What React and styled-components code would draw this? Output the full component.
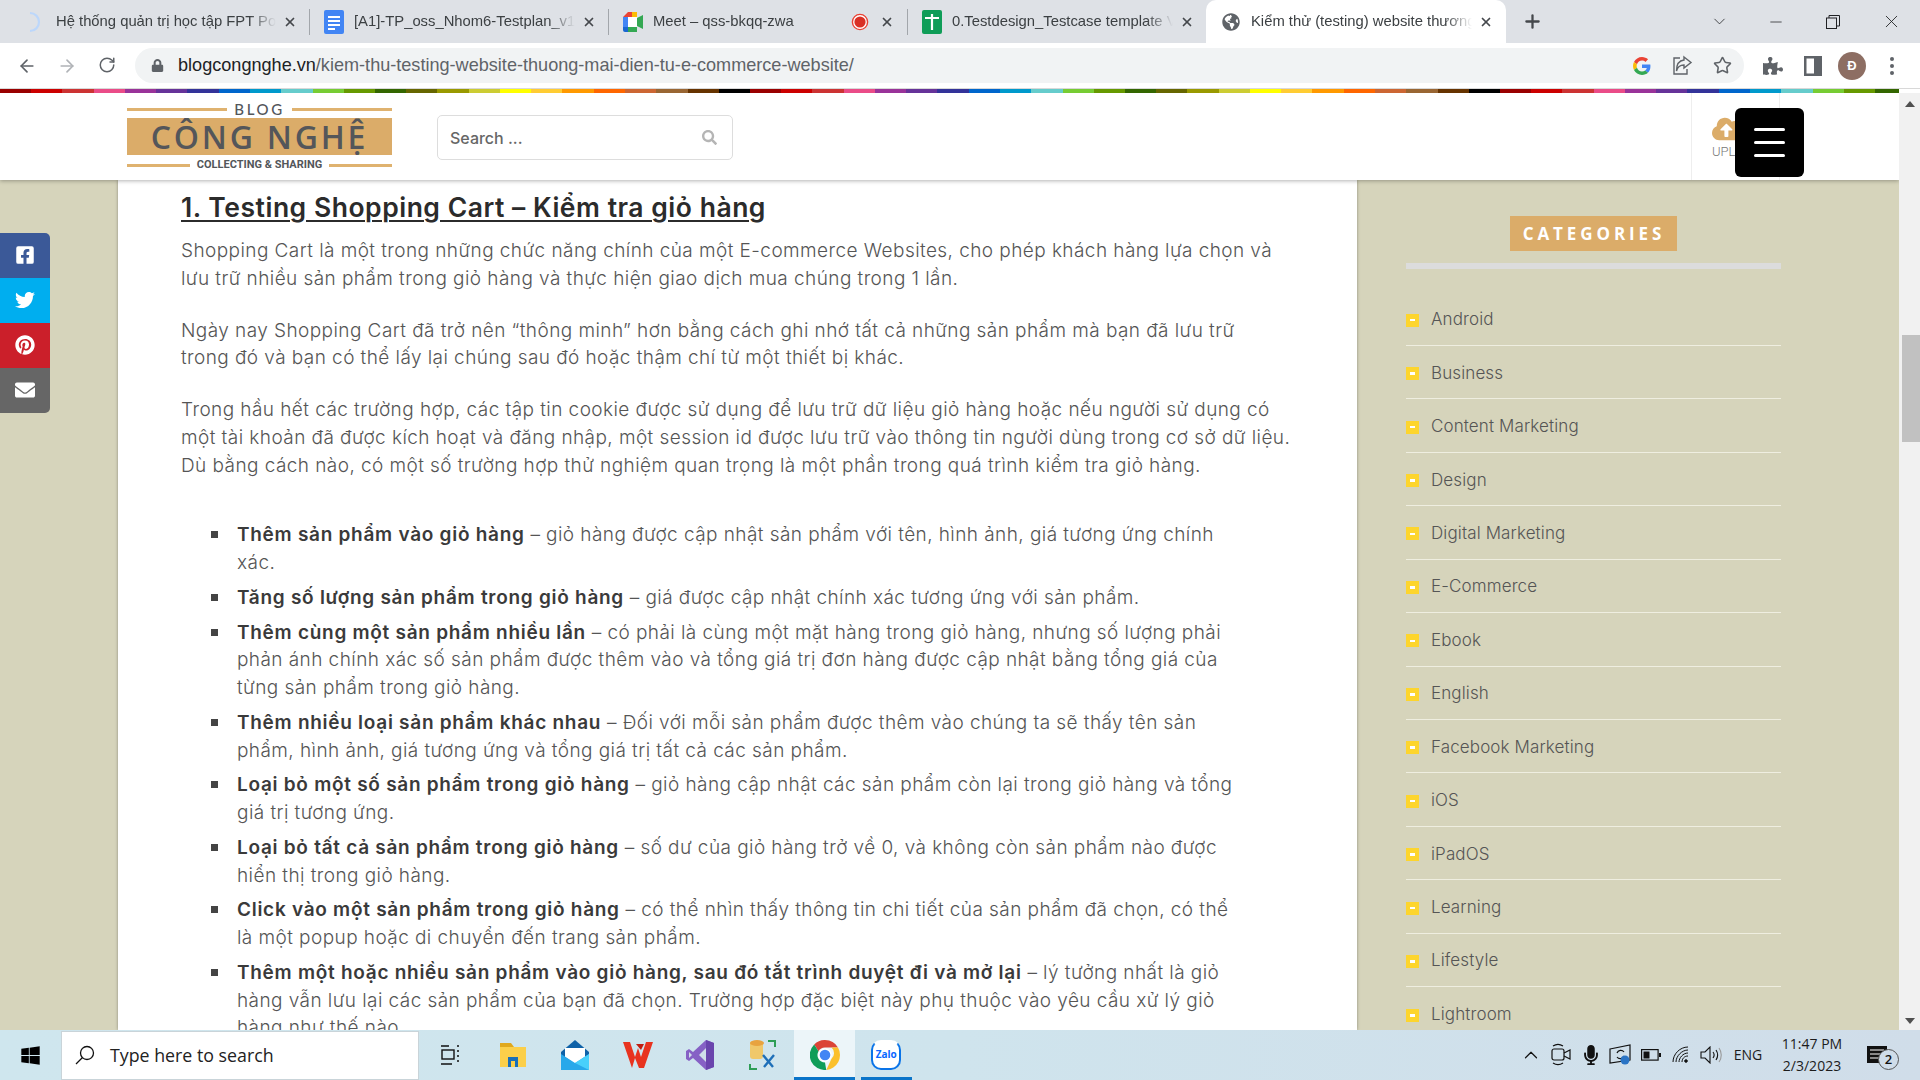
import React from "react";
import styled, { createGlobalStyle } from "styled-components";
import { ArrowLeft, ArrowRight, RotateCw, Star, X, Plus, ChevronDown, Minus, ChevronUp } from "lucide-react";
import { FaLock, FaSearch, FaGlobeAmericas, FaPuzzlePiece, FaCloudUploadAlt, FaFacebookSquare, FaTwitter, FaPinterest, FaEnvelope, FaWindows, FaMicrophone } from "react-icons/fa";

const Global = createGlobalStyle`
  html, body { margin: 0; padding: 0; width: 1920px; height: 1080px; overflow: hidden; }
  body { font-family: Inter, "Noto Sans", sans-serif; }
  * { box-sizing: border-box; }
`;
const UI = `"Liberation Sans", Arial, sans-serif`;
const Screen = styled.div`width:1920px;height:1080px;display:flex;flex-direction:column;overflow:hidden;`;

const TabBar = styled.div`height:43px;background:#dee1e6;display:flex;align-items:center;padding-left:10px;flex:none;`;
const Tab = styled.div`
  width:${p=>p.$w||299}px;height:43px;display:flex;align-items:center;position:relative;padding-left:${p=>p.$pad||14}px;
  font-family:${UI};font-size:14.8px;color:#3c4043;
  background:${p=>p.$active?"#fff":"transparent"};
  border-radius:${p=>p.$active?"10px 10px 0 0":"0"};
`;
const TabSepWrap = styled.div`width:1px;height:26px;background:#a2a6ab;flex:none;`;
const TabTitle = styled.span`flex:1;overflow:hidden;white-space:nowrap;margin-left:${p=>p.$ml||10}px;padding-bottom:2px;
  -webkit-mask-image:linear-gradient(90deg,#000 88%,transparent 100%);mask-image:linear-gradient(90deg,#000 88%,transparent 100%);`;
const TabClose = styled.span`width:28px;margin-left:${p=>p.$ml||0}px;margin-right:${p=>p.$mr||5}px;display:flex;justify-content:center;color:#45484c;flex:none;`;
const WinControls = styled.div`flex:1;display:flex;align-items:center;color:#202124;`;
const NewTab = styled.div`margin-left:16px;display:flex;color:#45484c;`;
const WinBtn = styled.div`position:relative;display:flex;justify-content:center;align-items:center;width:${p=>p.$w}px;margin-left:${p=>p.$ml||0}px;`;

const ToolBar = styled.div`height:46px;background:#fff;border-bottom:1px solid #d8d8d8;display:flex;align-items:center;padding:1px 0 1px 0;flex:none;`;
const NavIcon = styled.div`width:${p=>p.$w||40}px;margin-right:${p=>p.$mr||0}px;display:flex;justify-content:center;color:${p=>p.$c||"#5f6368"};flex:none;`;
const NavGroup = styled.div`display:flex;padding-left:7px;width:135px;`;
const Omnibox = styled.div`width:1609px;height:35px;background:#f1f3f4;border-radius:18px;display:flex;align-items:center;padding-left:16px;flex:none;`;
const Url = styled.div`margin-left:14px;font-family:${UI};font-size:18.1px;color:#5f6368;flex:1;white-space:nowrap;`;
const UrlHost = styled.span`color:#202124;`;
const Avatar = styled.div`width:28px;height:28px;border-radius:50%;background:#8d6e63;color:#fff;font:700 13px ${UI};display:flex;align-items:center;justify-content:center;margin-left:14px;`;

const Rainbow = styled.div`height:4px;flex:none;width:1899px;
  background:linear-gradient(90deg,${p=>p.$stops});background-size:750px 4px;background-repeat:repeat-x;`;

const Viewport = styled.div`flex:1;display:flex;min-height:0;position:relative;`;
const Page = styled.div`width:1899px;position:relative;overflow:hidden;background:#d6d4bb;display:flex;flex-direction:column;`;
const Header = styled.header`height:87px;flex:none;background:#fff;box-shadow:0 1px 4px rgba(0,0,0,.3);position:relative;z-index:3;display:flex;align-items:flex-start;padding-left:127px;`;
const Logo = styled.div`width:265px;margin-top:10px;display:flex;flex-direction:column;color:#53565a;`;
const LogoRow = styled.div`display:flex;align-items:center;gap:${p=>p.$gap}px;height:${p=>p.$h}px;line-height:${p=>p.$h}px;font-family:${p=>p.$font||"Lato"},sans-serif;font-size:${p=>p.$fs}px;letter-spacing:${p=>p.$ls}px;font-weight:${p=>p.$fw||500};white-space:nowrap;`;
const LogoLine = styled.i`flex:1;height:3px;background:#dfb26f;display:block;`;
const LogoBox = styled.div`height:37px;margin:2px 0 3px;background:#dbac69;display:flex;align-items:center;justify-content:center;font:600 32px/30px "Open Sans",sans-serif;letter-spacing:2.8px;padding-top:1px;white-space:nowrap;color:#54565a;`;
const SearchBox = styled.div`margin:22px 0 0 45px;width:296px;height:45px;border:1px solid #ddd;border-radius:5px;display:flex;align-items:center;justify-content:space-between;padding:0 15px 0 12px;font:500 16px Inter,sans-serif;color:#666;`;
const Upload = styled.div`margin-left:auto;margin-right:119px;width:89px;height:87px;border-left:1px solid #eee;border-right:1px solid #eee;padding:20px 0 0 20px;color:#777;font:300 13px Roboto,sans-serif;display:flex;flex-direction:column;`;
const UploadText = styled.span`margin-top:-1px;`;
const Burger = styled.div`position:absolute;left:1735px;top:15px;width:69px;height:69px;background:#000;border-radius:6px;display:flex;flex-direction:column;align-items:center;justify-content:center;gap:10px;`;
const BurgerBar = styled.i`display:block;width:31px;height:3px;border-radius:2px;background:#fff;`;

const Share = styled.div`position:absolute;left:0;top:140px;width:50px;border-radius:0 5px 5px 0;overflow:hidden;z-index:2;`;
const ShareBtn = styled.div`height:45px;background:${p=>p.$bg};color:#fff;display:flex;align-items:center;justify-content:center;padding-bottom:2px;`;

const Body = styled.div`flex:1;display:flex;min-height:0;`;
const Gutter = styled.div`width:118px;flex:none;`;
const Article = styled.article`width:1239px;flex:none;background:#fff;box-shadow:0 0 3px rgba(0,0,0,.35);padding:8px 0 0 63px;color:#555;font:300 19px/27.7px Inter,"Noto Sans",sans-serif;overflow:hidden;position:relative;`;
const Heading = styled.h2`margin:0 0 11px;font:600 26.5px/38px Inter,sans-serif;color:#2b2b2b;text-decoration:underline;text-underline-offset:3px;text-decoration-thickness:2px;white-space:nowrap;letter-spacing:.52px;`;
const Para = styled.p`margin:0 0 24.2px;`;
const Line = styled.span`display:block;white-space:nowrap;letter-spacing:.43px;`;
const List = styled.ul`margin:42px 0 0;padding:0 0 0 56px;list-style:none;`;
const Item = styled.li`margin-bottom:7.1px;position:relative;&::before{content:"";position:absolute;left:-26px;top:10px;width:7px;height:7px;background:#444;}`;
const Strong = styled.strong`font-weight:600;color:#3a3a3a;letter-spacing:.72px;`;

const Side = styled.aside`flex:1;padding:36px 0 0 49px;`;
const SideInner = styled.div`width:375px;display:flex;flex-direction:column;`;
const Badge = styled.div`align-self:center;height:35px;padding:0 12px 0 13px;background:#dbac69;color:#fff;font:700 17px/35px "Open Sans",sans-serif;letter-spacing:3.9px;`;
const BadgeBar = styled.div`height:6px;background:#dcdcdc;margin:12px 0 23.5px;`;
const Cat = styled.div`height:53.45px;display:flex;align-items:center;gap:12px;border-bottom:1px solid #efeee0;color:#555;font:300 17px Inter,sans-serif;letter-spacing:.12px;padding-top:1px;&:last-child{border-bottom:none;}`;
const Bullet = styled.i`width:13px;height:13px;background:#fdd52d;display:flex;align-items:center;justify-content:center;margin-top:2px;&::after{content:"";width:5px;height:2.5px;background:#fff;display:block;}`;

const Scrollbar = styled.div`width:21px;background:#f1f1f1;display:flex;flex-direction:column;align-items:center;padding-top:8px;position:relative;`;
const Arrow = styled.i`width:0;height:0;border-left:5px solid transparent;border-right:5px solid transparent;${p=>p.$down?"border-top:6px solid #505050;position:absolute;bottom:6px;":"border-bottom:6px solid #505050;"}`;
const Thumb = styled.div`position:absolute;top:242px;left:3px;right:0;height:107px;background:#c1c1c1;`;

const TaskBar = styled.div`height:50px;flex:none;background:linear-gradient(90deg,#cfe6ee 0%,#cfe4ed 50%,#d0dde9 100%);display:flex;align-items:center;font-family:"Open Sans",sans-serif;color:#1c1c1c;`;
const StartBtn = styled.div`width:61px;display:flex;justify-content:center;color:#000;flex:none;`;
const TaskSearch = styled.div`width:358px;height:49px;background:#fff;border:1px solid #c9d4d9;display:flex;align-items:center;padding-left:13px;gap:15px;font-size:17.8px;color:#222;flex:none;`;
const TaskApp = styled.div`width:${p=>p.$w||62.5}px;height:50px;display:flex;align-items:center;justify-content:center;flex:none;position:relative;background:${p=>p.$on?"#ecf5f9":"transparent"};`;
const AppUnder = styled.i`position:absolute;bottom:0;left:${p=>p.$l||0}px;right:${p=>p.$r||0}px;height:3px;background:#0a74c9;display:block;`;
const Tray = styled.div`margin-left:auto;display:flex;align-items:center;color:#111;`;
const TrayIcon = styled.div`width:30px;display:flex;justify-content:center;flex:none;`;
const TrayText = styled.div`font-size:14px;width:${p=>p.$w}px;text-align:center;color:#1c1c1c;line-height:22px;flex:none;`;
const Notif = styled.div`width:66px;height:50px;position:relative;display:flex;align-items:center;justify-content:center;padding-right:20px;flex:none;`;
const NotifCount = styled.span`position:absolute;left:24px;top:19px;width:21px;height:21px;border-radius:50%;border:1.5px solid #555;background:#d0dde9;font:600 13px/18px "Open Sans",sans-serif;text-align:center;color:#111;`;

const Docs = () => <svg width="20" height="24" viewBox="0 0 20 24"><rect width="20" height="24" rx="2" fill="#4285f4"/><path d="M4 7h12M4 11h12M4 15h12M4 19h7" stroke="#fff" strokeWidth="2"/></svg>;
const Sheets = () => <svg width="20" height="24" viewBox="0 0 20 24"><rect width="20" height="24" rx="2" fill="#0f9d58"/><path d="M3 8h14M10 4v16" stroke="#fff" strokeWidth="2.2"/></svg>;
const Meet = () => <svg width="20" height="20" viewBox="0 0 20 20"><path d="M0 5 5 0h9v5H5v10H0z" fill="#ea4335"/><path d="M0 5h5v10H0z" fill="#4285f4"/><path d="M0 15h5v5H2a2 2 0 0 1-2-2z" fill="#1967d2"/><path d="M5 15h9v5H5z" fill="#34a853"/><path d="M5 5h9v10H5z" fill="#fff"/><path d="M9 0h5v5H9z" fill="#fbbc04"/><path d="M14 6l6-3v14l-6-3z" fill="#34a853"/></svg>;
const Spinner = () => <svg width="20" height="24" viewBox="0 0 20 24"><path d="M6 3a9 9 0 0 1 0 18" fill="none" stroke="#bcd7fb" strokeWidth="2.2"/></svg>;
const Rec = () => <svg width="18" height="18" viewBox="0 0 18 18"><circle cx="9" cy="9" r="7.6" fill="#fff" stroke="#ea4335" strokeWidth="1.4"/><circle cx="9" cy="9" r="5.6" fill="#d93025"/></svg>;
const G = () => <svg width="18" height="18" viewBox="0 0 48 48"><path fill="#ea4335" d="M24 9.5c3.5 0 6.7 1.2 9.2 3.6l6.9-6.9C35.9 2.4 30.5 0 24 0 14.6 0 6.5 5.4 2.6 13.2l8 6.2C12.5 13.6 17.800 9.5 24 9.500z"/><path fill="#4285f4" d="M46.500 24.500c0-1.600-.2-3.100-.4-4.500H24v9h12.700c-.5 2.900-2.200 5.400-4.700 7l7.700 6c4.500-4.200 6.800-10.300 6.800-17.500z"/><path fill="#fbbc05" d="M10.500 28.600c-.5-1.400-.8-3-.8-4.600s.3-3.200.8-4.600l-8-6.200C.9 16.500 0 20.100 0 24s.9 7.500 2.600 10.800z"/><path fill="#34a853" d="M24 48c6.500 0 11.900-2.100 15.900-5.800l-7.700-6c-2.100 1.400-4.900 2.300-8.200 2.300-6.200 0-11.500-4.200-13.400-9.900l-8 6.200C6.500 42.600 14.600 48 24 48z"/></svg>;
const ShareIco = () => <svg width="21" height="21" viewBox="0 0 21 21" fill="none" stroke="#5f6368" strokeWidth="1.4"><path d="M8 3H2v16h13v-5"/><path d="M12 2l7 5.500-7 5.500V10C8 10 5.500 12 4.500 16 4.500 10 7 5.500 12 5z"/></svg>;
const SidePanel = () => <svg width="18" height="20" viewBox="0 0 18 20"><path fillRule="evenodd" d="M0 0h18v20H0zM2.500 2.500v15H10v-15z" fill="#5f6368"/></svg>;
const Dots = () => <svg width="6" height="20" viewBox="0 0 6 20" fill="#5f6368"><circle cx="3" cy="3" r="2"/><circle cx="3" cy="10" r="2"/><circle cx="3" cy="17" r="2"/></svg>;
const Restore = () => <svg width="14" height="14" viewBox="0 0 14 14" fill="none" stroke="#202124"><rect x=".5" y="3" width="10" height="10.500"/><path d="M3 3V.5h10.500v10.500H10.500"/></svg>;

const TaskView = () => <svg width="20" height="24" viewBox="0 0 20 24" fill="none" stroke="#111" strokeWidth="1.4"><path d="M1 3h8M1 21h11"/><rect x="2" y="7" width="12" height="9"/><path d="M17 3h2M17 8h2M17 13h2M17 18h2"/></svg>;
const Explorer = () => <svg width="28" height="26" viewBox="0 0 28 26"><path d="M1 1h11l3 4H1z" fill="#e0a81d"/><rect x="1" y="5" width="26" height="20" fill="#fbcf4a"/><path d="M9 25V15h10v10h-3v-6h-4v6z" fill="#1a6fb8"/></svg>;
const Mail = () => <svg width="30" height="30" viewBox="0 0 30 30"><path d="M15 0 29 12v18H1V12z" fill="#0f62a8"/><path d="M5 8h20v9l-10 7-10-7z" fill="#fff"/><path d="M1 14l14 9 14-9v16H1z" fill="#28a8ea"/><path d="M15 23l14-9v16z" fill="#50d9ff" opacity=".8"/></svg>;
const Wps = () => <svg width="30" height="26" viewBox="0 0 30 26"><path d="M0 0h7l5 15 3-9 3 9 5-15h7l-9 26h-5l-4-10-3 10H9z" fill="#e8331f"/><path d="M13 2h8l-3 6z" fill="#c21c10"/></svg>;
const VS = () => <svg width="28" height="30" viewBox="0 0 28 30"><path d="M20 0l8 3v24l-8 3L7 18l-4 3-3-2V11l3-2 4 3z" fill="#8661c5"/><path d="M20 8l-7 7 7 7z" fill="#d0dde9"/><path d="M3 12v6l3-3z" fill="#d0dde9"/><path d="M20 0l8 3v24l-8 3z" fill="#6a45ad"/></svg>;
const Tool = () => <svg width="30" height="32" viewBox="0 0 30 32" fill="none"><rect x="2" y="2" width="13" height="18" rx="3" fill="#f0c86a"/><ellipse cx="9" cy="4" rx="7" ry="3" fill="#e8a33f"/><path d="M20 2h7v6M2 25v5h7" stroke="#2e9e56" strokeWidth="2"/><path d="M15 16l10 12M26 16L16 28" stroke="#1e6fb8" strokeWidth="2.4"/></svg>;
const Chrome = () => <svg width="30" height="30" viewBox="0 0 48 48"><path d="M24 0a24 24 0 0 1 20.800 12H24a12 12 0 0 0-10.400 6L6.700 7A24 24 0 0 1 24 0z" fill="#db4437"/><path d="M44.800 12A24 24 0 0 1 26 47.900L34.400 30a12 12 0 0 0 0-18z" fill="#fbc02d"/><path d="M6.700 7l6.900 11a12 12 0 0 0 10.400 18l2 11.900A24 24 0 0 1 6.700 7z" fill="#0f9d58"/><circle cx="24" cy="24" r="11" fill="#fff"/><circle cx="24" cy="24" r="8.500" fill="#4285f4"/></svg>;
const ZaloBubble = styled.div`width:30px;height:30px;border-radius:10px;background:#fff;border:2px solid #0a74e8;border-top-color:#fff;color:#0a68ff;font:700 10px/24px "Open Sans",sans-serif;text-align:center;`;
const Cam = () => <svg width="24" height="26" viewBox="0 0 24 26" fill="none" stroke="#111" strokeWidth="1.2"><rect x="3" y="7" width="12" height="11" rx="2"/><path d="M15 11l6-3v9l-6-3M4 4c3-2 7-2 10 0M4 21c3 2 7 2 10 0"/></svg>;
const Display = () => <svg width="24" height="22" viewBox="0 0 24 22" fill="none" stroke="#111" strokeWidth="1.2"><path d="M1 5l20-4v15L1 19z"/><path d="M8 9a4 4 0 0 1 7-1M15 12a4 4 0 0 1-7 1"/><circle cx="16" cy="16" r="4.500" fill="#2a74c5" stroke="none"/></svg>;
const Battery = () => <svg width="20" height="12" viewBox="0 0 20 12" fill="none" stroke="#111" strokeWidth="1.2"><rect x=".6" y=".6" width="16.500" height="10.500"/><rect x="2.500" y="2.500" width="6" height="7" fill="#111" stroke="none"/><rect x="18" y="4" width="2" height="4" fill="#111" stroke="none"/></svg>;
const Wifi = () => <svg width="18" height="18" viewBox="0 0 18 18" fill="none" stroke="#111" strokeWidth="1"><path d="M1 16C1 8 8 1 16 1M4 16C4 10 10 4 16 4M7 16c0-4 4-9 9-9M10 16c0-3 2-6 6-6"/><circle cx="14" cy="15" r="1.300" fill="#111"/></svg>;
const Speaker = () => <svg width="22" height="18" viewBox="0 0 22 18" fill="none" stroke="#111" strokeWidth="1.1"><path d="M1 6h4l5-5v16l-5-5H1z"/><path d="M13 6c1.500 2 1.500 4 0 6"/><path d="M16 4c2 3 2 7 0 10"/><path d="M19 2c3 4 3 10 0 14" stroke="#999"/></svg>;
const NotifIco = () => <svg width="20" height="18" viewBox="0 0 20 18"><path d="M0 0h20v17H0z" fill="#111"/><path d="M3 4h14M3 8h14M3 12h9" stroke="#fff" strokeWidth="1.200"/></svg>;

const colors = ["#990000","#cc0000","#cc3333","#ea4c88","#993399","#663399","#333399","#0066cc","#0099cc","#66cccc","#77cc33","#669900","#336600","#666600","#999900","#cccc33","#ffff00","#ffcc33","#ff9900","#ff6600","#cc6633","#996633","#663300","#000000"];
const stops = colors.map((c,i)=>`${c} ${(i/24*100).toFixed(3)}% ${((i+1)/24*100).toFixed(3)}%`).join(",");

const cats = ["Android","Business","Content Marketing","Design","Digital Marketing","E-Commerce","Ebook","English","Facebook Marketing","iOS","iPadOS","Learning","Lifestyle","Lightroom"];
const paras = [
 ["Shopping Cart là một trong những chức năng chính của một E-commerce Websites, cho phép khách hàng lựa chọn và","lưu trữ nhiều sản phẩm trong giỏ hàng và thực hiện giao dịch mua chúng trong 1 lần."],
 ["Ngày nay Shopping Cart đã trở nên “thông minh” hơn bằng cách ghi nhớ tất cả những sản phẩm mà bạn đã lưu trữ","trong đó và bạn có thể lấy lại chúng sau đó hoặc thậm chí từ một thiết bị khác."],
 ["Trong hầu hết các trường hợp, các tập tin cookie được sử dụng để lưu trữ dữ liệu giỏ hàng hoặc nếu người sử dụng có","một tài khoản đã được kích hoạt và đăng nhập, một session id được lưu trữ vào thông tin người dùng trong cơ sở dữ liệu.","Dù bằng cách nào, có một số trường hợp thử nghiệm quan trọng là một phần trong quá trình kiểm tra giỏ hàng."],
];
const items = [
 ["Thêm sản phẩm vào giỏ hàng"," – giỏ hàng được cập nhật sản phẩm với tên, hình ảnh, giá tương ứng chính",["xác."]],
 ["Tăng số lượng sản phẩm trong giỏ hàng"," – giá được cập nhật chính xác tương ứng với sản phẩm.",[]],
 ["Thêm cùng một sản phẩm nhiều lần"," – có phải là cùng một mặt hàng trong giỏ hàng, nhưng số lượng phải",["phản ánh chính xác số sản phẩm được thêm vào và tổng giá trị đơn hàng được cập nhật bằng tổng giá của","từng sản phẩm trong giỏ hàng."]],
 ["Thêm nhiều loại sản phẩm khác nhau"," – Đối với mỗi sản phẩm được thêm vào chúng ta sẽ thấy tên sản",["phẩm, hình ảnh, giá tương ứng và tổng giá trị tất cả các sản phẩm."]],
 ["Loại bỏ một số sản phẩm trong giỏ hàng"," – giỏ hàng cập nhật các sản phẩm còn lại trong giỏ hàng và tổng",["giá trị tương ứng."]],
 ["Loại bỏ tất cả sản phẩm trong giỏ hàng"," – số dư của giỏ hàng trở về 0, và không còn sản phẩm nào được",["hiển thị trong giỏ hàng."]],
 ["Click vào một sản phẩm trong giỏ hàng"," – có thể nhìn thấy thông tin chi tiết của sản phẩm đã chọn, có thể",["là một popup hoặc di chuyển đến trang sản phẩm."]],
 ["Thêm một hoặc nhiều sản phẩm vào giỏ hàng, sau đó tắt trình duyệt đi và mở lại"," – lý tưởng nhất là giỏ",["hàng vẫn lưu lại các sản phẩm của bạn đã chọn. Trường hợp đặc biệt này phụ thuộc vào yêu cầu xử lý giỏ","hàng như thế nào."]],
];
const CloseIco = () => <X size={14} strokeWidth={3}/>;

export default function App(){
  return <Screen>
    <Global/>
    <TabBar>
      <Tab $w={299}><Spinner/><TabTitle $ml={12}>Hệ thống quản trị học tập FPT Polytechnic</TabTitle><TabClose><CloseIco/></TabClose></Tab>
      <TabSepWrap/>
      <Tab $w={298}><Docs/><TabTitle>[A1]-TP_oss_Nhom6-Testplan_v1.0</TabTitle><TabClose><CloseIco/></TabClose></Tab>
      <TabSepWrap/>
      <Tab $w={298}><Meet/><TabTitle>Meet – qss-bkqq-zwa</TabTitle><Rec/><TabClose $ml={4} $mr={6}><CloseIco/></TabClose></Tab>
      <TabSepWrap/>
      <Tab $w={298}><Sheets/><TabTitle>0.Testdesign_Testcase template VN</TabTitle><TabClose><CloseIco/></TabClose></Tab>
      <Tab $w={300} $active $pad={16}><FaGlobeAmericas size={18} color="#5f6368"/><TabTitle $ml={11}>Kiểm thử (testing) website thương mại điện tử</TabTitle><TabClose $mr={6}><CloseIco/></TabClose></Tab>
      <WinControls>
        <NewTab><Plus size={21} strokeWidth={2.6}/></NewTab>
        <WinBtn $w={26} $ml={163}><ChevronDown size={19} strokeWidth={1}/></WinBtn>
        <WinBtn $w={26} $ml={31}><Minus size={18} strokeWidth={1}/></WinBtn>
        <WinBtn $w={26} $ml={31}><Restore/></WinBtn>
        <WinBtn $w={26} $ml={32}><X size={21} strokeWidth={1}/></WinBtn>
      </WinControls>
    </TabBar>
    <ToolBar>
      <NavGroup>
        <NavIcon><ArrowLeft size={20} strokeWidth={2}/></NavIcon>
        <NavIcon $c="#b0b3b7"><ArrowRight size={20} strokeWidth={2}/></NavIcon>
        <NavIcon><RotateCw size={18} strokeWidth={2}/></NavIcon>
      </NavGroup>
      <Omnibox>
        <FaLock size={13} color="#5f6368"/>
        <Url><UrlHost>blogcongnghe.vn</UrlHost>/kiem-thu-testing-website-thuong-mai-dien-tu-e-commerce-website/</Url>
        <NavIcon><G/></NavIcon>
        <NavIcon><ShareIco/></NavIcon>
        <NavIcon $mr={2}><Star size={19} strokeWidth={2}/></NavIcon>
      </Omnibox>
      <NavIcon $w={58}><FaPuzzlePiece size={20}/></NavIcon>
      <NavIcon $w={22}><SidePanel/></NavIcon>
      <Avatar>Đ</Avatar>
      <NavIcon $w={52}><Dots/></NavIcon>
    </ToolBar>
    <Rainbow $stops={stops}/>
    <Viewport>
      <Page>
        <Header>
          <Logo>
            <LogoRow $h={13} $gap={7} $fs={15} $ls={2.6}><LogoLine/>BLOG<LogoLine/></LogoRow>
            <LogoBox>CÔNG NGHỆ</LogoBox>
            <LogoRow $h={14} $gap={7} $fs={11} $ls={0} $fw={700} $font="Roboto"><LogoLine/>COLLECTING &amp; SHARING<LogoLine/></LogoRow>
          </Logo>
          <SearchBox>Search ...<FaSearch size={15} color="#b5b5b5"/></SearchBox>
          <Upload><FaCloudUploadAlt size={32} color="#dbac69"/><UploadText>UPLOAD</UploadText></Upload>
          <Burger><BurgerBar/><BurgerBar/><BurgerBar/></Burger>
        </Header>
        <Share>
          <ShareBtn $bg="#3b5998"><FaFacebookSquare size={20}/></ShareBtn>
          <ShareBtn $bg="#00aeef"><FaTwitter size={20}/></ShareBtn>
          <ShareBtn $bg="#cb1f2a"><FaPinterest size={20}/></ShareBtn>
          <ShareBtn $bg="#666"><FaEnvelope size={20}/></ShareBtn>
        </Share>
        <Body>
          <Gutter/>
          <Article>
            <Heading>1. Testing Shopping Cart – Kiểm tra giỏ hàng</Heading>
            {paras.map((p,i)=><Para key={i}>{p.map((l,j)=><Line key={j}>{l}</Line>)}</Para>)}
            <List>
              {items.map((it,i)=><Item key={i}><Line><Strong>{it[0]}</Strong>{it[1]}</Line>{it[2].map((l,j)=><Line key={j}>{l}</Line>)}</Item>)}
            </List>
          </Article>
          <Side>
            <SideInner>
              <Badge>CATEGORIES</Badge>
              <BadgeBar/>
              {cats.map(c=><Cat key={c}><Bullet/>{c}</Cat>)}
            </SideInner>
          </Side>
        </Body>
      </Page>
      <Scrollbar><Arrow/><Thumb/><Arrow $down/></Scrollbar>
    </Viewport>
    <TaskBar>
      <StartBtn><FaWindows size={21}/></StartBtn>
      <TaskSearch>
        <svg width="20" height="20" viewBox="0 0 20 20" fill="none" stroke="#111" strokeWidth="1.3"><circle cx="12" cy="8" r="6.500"/><path d="M7.500 12.500 1 19"/></svg>
        Type here to search
      </TaskSearch>
      <TaskApp><TaskView/></TaskApp>
      <TaskApp><Explorer/></TaskApp>
      <TaskApp><Mail/></TaskApp>
      <TaskApp><Wps/></TaskApp>
      <TaskApp><VS/></TaskApp>
      <TaskApp><Tool/></TaskApp>
      <TaskApp $on $w={61}><Chrome/><AppUnder/></TaskApp>
      <TaskApp><ZaloBubble>Zalo</ZaloBubble><AppUnder $l={6} $r={6}/></TaskApp>
      <Tray>
        <TrayIcon><ChevronUp size={22} strokeWidth={1.3}/></TrayIcon>
        <TrayIcon><Cam/></TrayIcon>
        <TrayIcon><FaMicrophone size={20}/></TrayIcon>
        <TrayIcon><Display/></TrayIcon>
        <TrayIcon><Battery/></TrayIcon>
        <TrayIcon><Wifi/></TrayIcon>
        <TrayIcon><Speaker/></TrayIcon>
        <TrayText $w={44}>ENG</TrayText>
        <TrayText $w={84}>11:47 PM<br/>2/3/2023</TrayText>
        <Notif><NotifIco/><NotifCount>2</NotifCount></Notif>
      </Tray>
    </TaskBar>
  </Screen>;
}
